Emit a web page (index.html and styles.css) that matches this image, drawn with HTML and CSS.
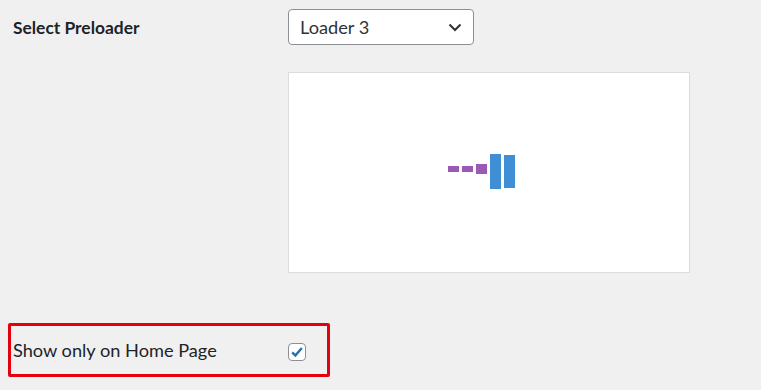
FILE: index.html
```html
<!DOCTYPE html>
<html lang="en">
<head>
    <meta charset="UTF-8">
    <title>Preloader Settings</title>
    <link rel="stylesheet" href="styles.css">
</head>
<body>
<div class="settings">
    <div class="row row-select">
        <div class="label strong">Select Preloader</div>
        <div class="field">
            <div class="select">
                <span>Loader 3</span>
                <svg class="chevron" width="14" height="9" viewBox="0 0 14 9">
                    <path d="M1.5 1.5 L7 7 L12.5 1.5" fill="none" stroke="#2c3338" stroke-width="2"/>
                </svg>
            </div>
        </div>
    </div>
    <div class="row">
        <div class="label"></div>
        <div class="field">
            <div class="preview">
                <div class="loader">
                    <span class="dot small"></span>
                    <span class="dot small"></span>
                    <span class="dot mid"></span>
                    <span class="bar tall"></span>
                    <span class="bar"></span>
                </div>
            </div>
        </div>
    </div>
    <div class="highlight">
        <div class="row row-check">
            <div class="label">Show only on Home Page</div>
            <div class="field">
                <span class="checkbox">
                    <svg width="16" height="16" viewBox="0 0 16 16">
                        <path d="M3.2 8.4 L6.4 11.6 L12.8 4" fill="none" stroke="#2271b1" stroke-width="2.4"/>
                    </svg>
                </span>
            </div>
        </div>
    </div>
</div>
</body>
</html>
```

FILE: styles.css
```css
body {
    font-family: 'Lato', 'Open Sans', sans-serif;
    background-color: #f0f0f1;
    color: #1d2327;
    margin: 0;
    padding: 0;
    font-size: 18.2px;
}

.settings {
    padding: 9px 0 0 0;
}

.row {
    display: flex;
    align-items: center;
}

.label {
    width: 275px;
    padding-left: 13px;
    flex: 0 0 auto;
}

.strong {
    font-weight: 700;
    font-size: 17.4px;
}

.select {
    height: 34px;
    border: 1px solid #8c8f94;
    border-radius: 4px;
    background-color: #fff;
    display: flex;
    align-items: center;
    justify-content: space-between;
    padding: 0 11px 0 11px;
    color: #2c3338;
    width: 162px;
}

.preview {
    margin-top: 27px;
    width: 400px;
    height: 199px;
    background-color: #fff;
    border: 1px solid #dcdcde;
    display: flex;
    align-items: center;
    justify-content: center;
}

.loader {
    display: flex;
    align-items: center;
    gap: 2px;
    margin-right: 15px;
    margin-top: -2px;
}

.dot {
    display: block;
    width: 11px;
    height: 6px;
    background-color: #9b59b6;
    margin-right: 1px;
    margin-bottom: 5px;
}

.dot.mid {
    height: 10px;
}

.bar {
    display: block;
    width: 11px;
    height: 33px;
    background-color: #3f8fd6;
    margin-left: 1px;
}

.bar.tall {
    height: 35px;
    margin-left: 0;
}

.highlight {
    margin: 50px 0 0 8px;
    width: 316px;
    height: 48px;
    border: 3px solid #e4000f;
    border-radius: 2px;
    display: flex;
    align-items: center;
}

.row-check .label {
    width: 275px;
    padding-left: 2px;
}

.checkbox {
    display: flex;
    align-items: center;
    justify-content: center;
    width: 16px;
    height: 16px;
    border: 1px solid #8c8f94;
    border-radius: 4px;
    background-color: #fff;
    margin-top: 3px;
}
```
